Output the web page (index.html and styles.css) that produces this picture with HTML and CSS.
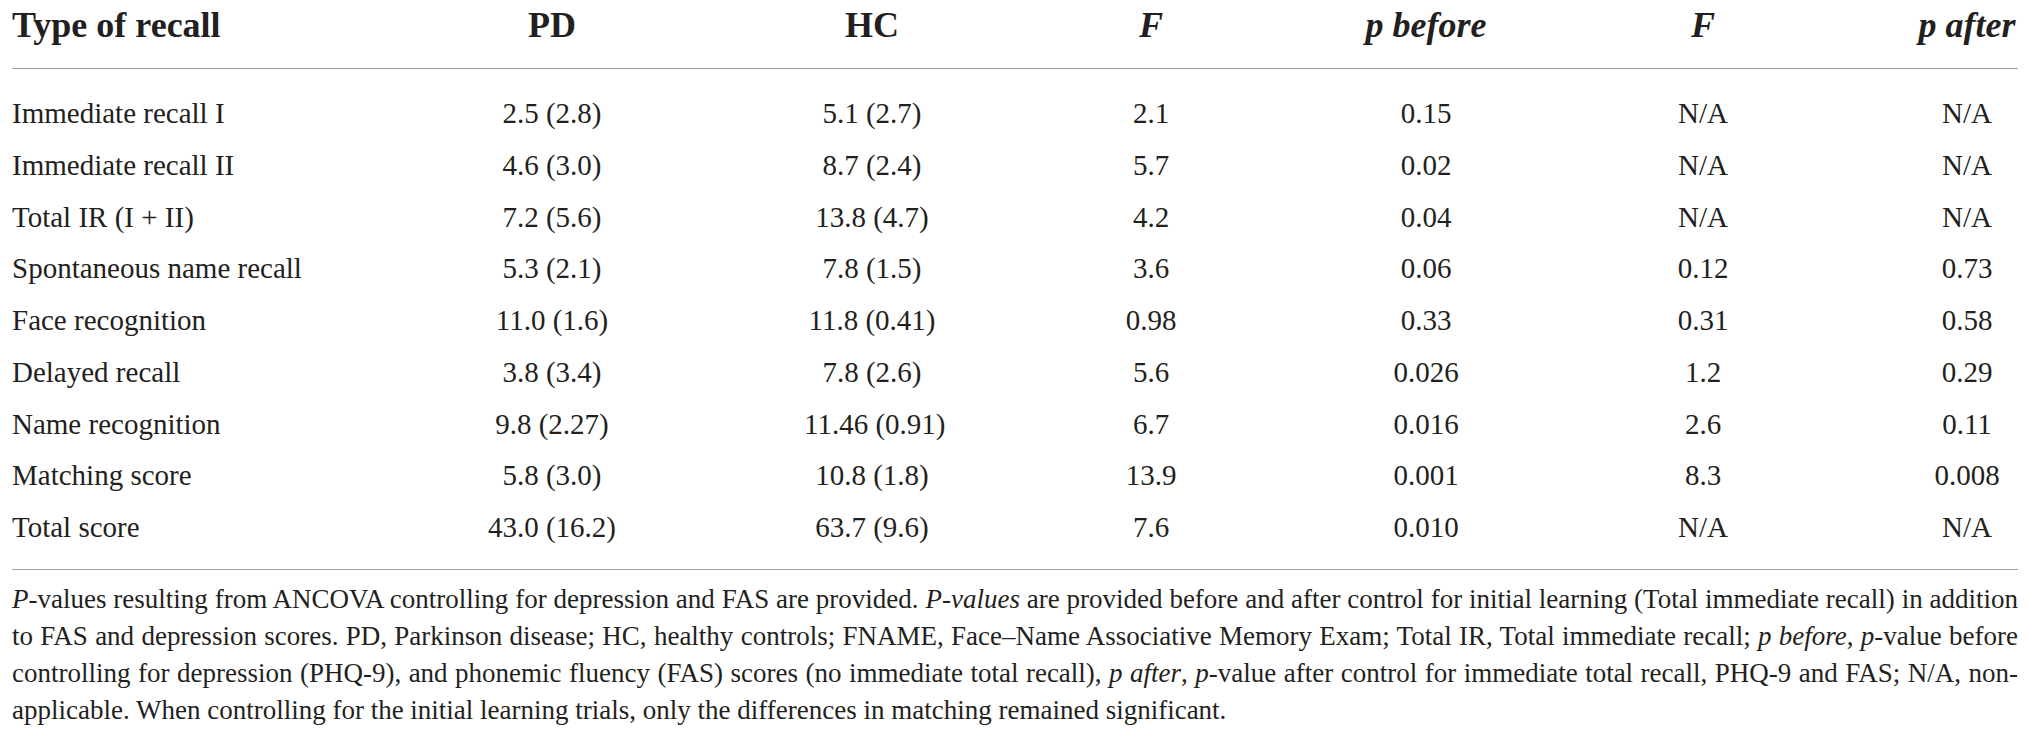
FILE: index.html
```html
<!DOCTYPE html>
<html lang="en">
<head>
  <meta charset="UTF-8">
  <title>FNAME recall table</title>
  <link rel="stylesheet" href="styles.css">
</head>
<body>

  <div class="tabela">
    <div class="linha cabecalho">
      <div class="nome">Type of recall</div>
      <div>PD</div>
      <div>HC</div>
      <div><i>F</i></div>
      <div><i>p before</i></div>
      <div><i>F</i></div>
      <div><i>p after</i></div>
    </div>

    <div class="corpo">
      <div class="linha">
        <div class="nome">Immediate recall I</div>
        <div>2.5 (2.8)</div><div>5.1 (2.7)</div><div>2.1</div><div>0.15</div><div>N/A</div><div>N/A</div>
      </div>
      <div class="linha">
        <div class="nome">Immediate recall II</div>
        <div>4.6 (3.0)</div><div>8.7 (2.4)</div><div>5.7</div><div>0.02</div><div>N/A</div><div>N/A</div>
      </div>
      <div class="linha">
        <div class="nome">Total IR (I + II)</div>
        <div>7.2 (5.6)</div><div>13.8 (4.7)</div><div>4.2</div><div>0.04</div><div>N/A</div><div>N/A</div>
      </div>
      <div class="linha">
        <div class="nome">Spontaneous name recall</div>
        <div>5.3 (2.1)</div><div>7.8 (1.5)</div><div>3.6</div><div>0.06</div><div>0.12</div><div>0.73</div>
      </div>
      <div class="linha">
        <div class="nome">Face recognition</div>
        <div>11.0 (1.6)</div><div>11.8 (0.41)</div><div>0.98</div><div>0.33</div><div>0.31</div><div>0.58</div>
      </div>
      <div class="linha">
        <div class="nome">Delayed recall</div>
        <div>3.8 (3.4)</div><div>7.8 (2.6)</div><div>5.6</div><div>0.026</div><div>1.2</div><div>0.29</div>
      </div>
      <div class="linha">
        <div class="nome">Name recognition</div>
        <div>9.8 (2.27)</div><div>11.46 (0.91)</div><div>6.7</div><div>0.016</div><div>2.6</div><div>0.11</div>
      </div>
      <div class="linha">
        <div class="nome">Matching score</div>
        <div>5.8 (3.0)</div><div>10.8 (1.8)</div><div>13.9</div><div>0.001</div><div>8.3</div><div>0.008</div>
      </div>
      <div class="linha">
        <div class="nome">Total score</div>
        <div>43.0 (16.2)</div><div>63.7 (9.6)</div><div>7.6</div><div>0.010</div><div>N/A</div><div>N/A</div>
      </div>
    </div>

    <p class="nota">
      <i>P</i>-values resulting from ANCOVA controlling for depression and FAS are provided. <i>P-values</i> are provided before and after control for initial learning (Total immediate recall) in addition to FAS and depression scores. PD, Parkinson disease; HC, healthy controls; FNAME, Face&ndash;Name Associative Memory Exam; Total IR, Total immediate recall; <i>p before</i>, <i>p</i>-value before controlling for depression (PHQ-9), and phonemic fluency (FAS) scores (no immediate total recall), <i>p after</i>, <i>p</i>-value after control for immediate total recall, PHQ-9 and FAS; N/A, non-applicable. When controlling for the initial learning trials, only the differences in matching remained significant.
    </p>
  </div>

</body>
</html>
```

FILE: styles.css
```css
body {
  margin: 0;
  padding: 0 12px;
  background: #fff;
  color: #231f20;
  font-family: "Liberation Serif", "Times New Roman", serif;
}

.linha {
  display: grid;
  grid-template-columns: 288px 504px 136px 422px 128px 426px 102px;
  text-align: center;
  white-space: nowrap;
}

.linha .nome {
  text-align: left;
}

.cabecalho {
  font-size: 36px;
  font-weight: bold;
  line-height: 36px;
  padding: 7px 0 25px;
  border-bottom: 1px solid #a3a3a3;
}

.corpo {
  font-size: 29px;
  line-height: 51.75px;
  padding: 19px 0 15px;
  border-bottom: 1px solid #a3a3a3;
}

.nota {
  margin: 11px 0 0;
  font-size: 27px;
  line-height: 37px;
  text-align: justify;
}
```
